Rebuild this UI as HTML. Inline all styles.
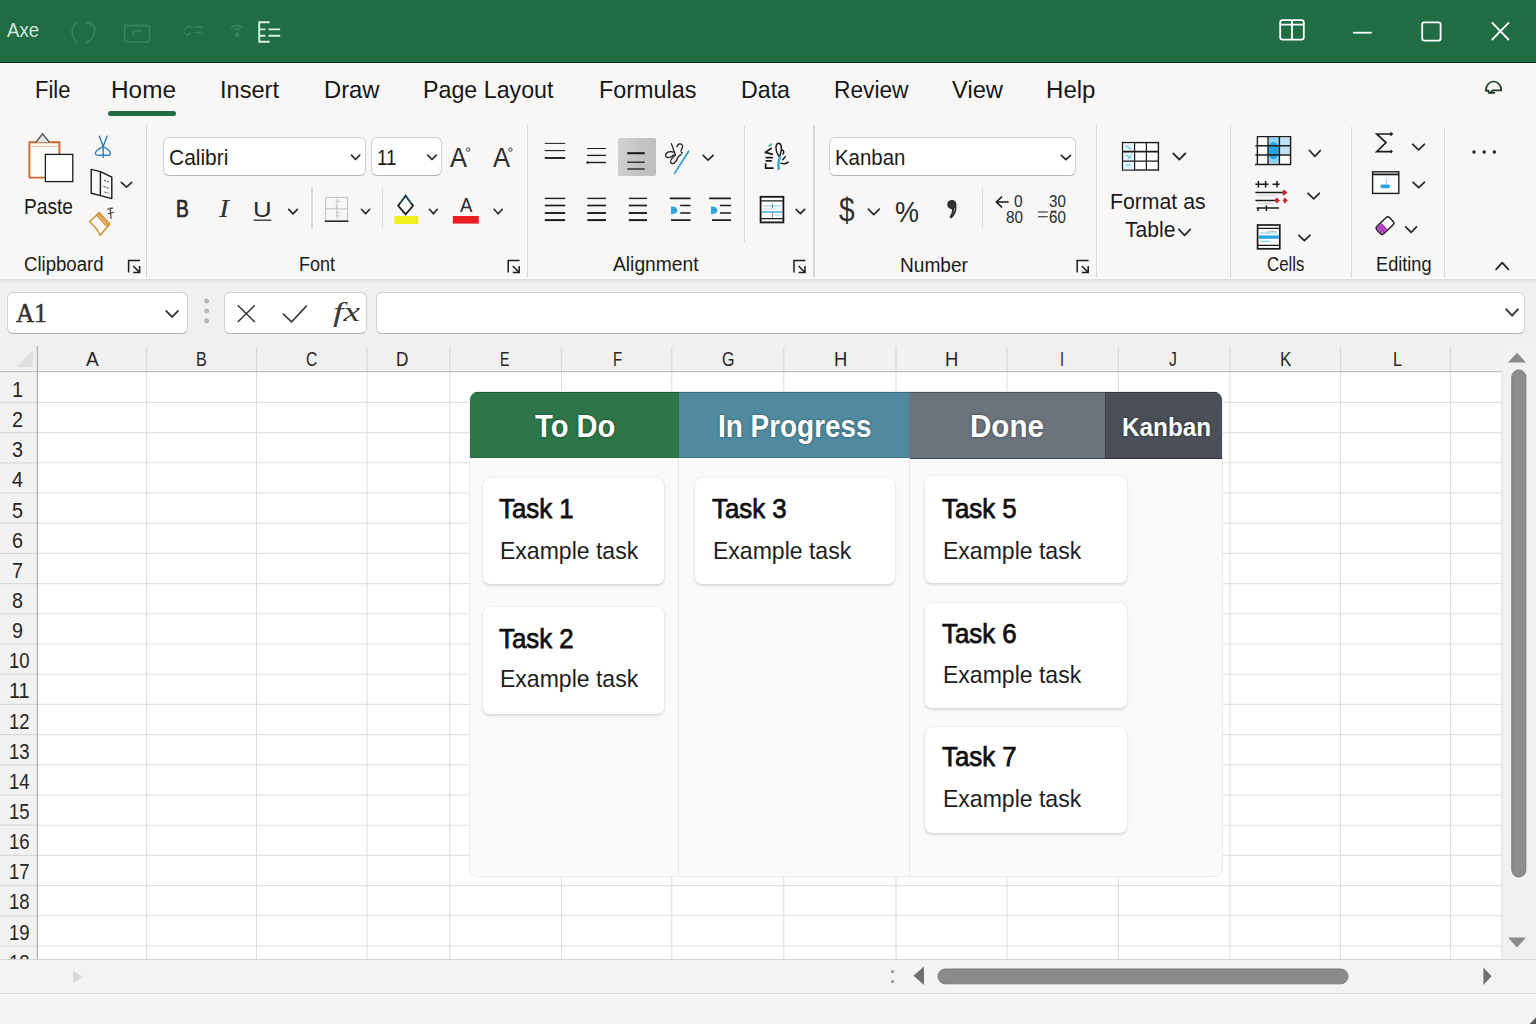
<!DOCTYPE html>
<html lang="en"><head><meta charset="utf-8"><title>Kanban - Excel</title>
<style>
html,body{margin:0;padding:0;}
body{width:1536px;height:1024px;overflow:hidden;background:#f0f0f0;}
#app{position:relative;width:1536px;height:1024px;overflow:hidden;background:#f0f0f0;font-family:"Liberation Sans",sans-serif;}
#app>div,#app>svg{position:absolute;}
.t{position:absolute;white-space:nowrap;line-height:1;transform-origin:0 50%;display:block;}
#titlebar{left:0;top:0;width:1536px;height:62.8px;background:#206c43;border-bottom:1.3px solid #0d301c;box-sizing:border-box;}
#ribbon{left:0;top:62.8px;width:1536px;height:216.2px;background:#f8f7f6;}
#ribshadow{left:0;top:279px;width:1536px;height:5px;background:linear-gradient(#dcdcdc,#ececec 60%,#f0f0f0);}
#tabline{left:108px;top:110.6px;width:68px;height:5px;border-radius:3px;background:#1f6e42;}
.box{background:#fff;border:1px solid #d0d0d0;border-bottom-color:#b4b4b4;border-radius:6px;box-sizing:border-box;}
.sep{width:1.4px;background:#d8d8d8;}
#grid{left:0;top:344px;width:1502px;height:615px;background:#fff;overflow:hidden;}
#hscroll{z-index:3;left:0;top:959px;width:1536px;height:34px;background:#f3f3f3;border-top:1.6px solid #d4d4d4;box-sizing:border-box;}
#status{z-index:3;left:0;top:993px;width:1536px;height:31px;background:#f5f4f3;border-top:1.4px solid #dcdcdc;box-sizing:border-box;}
#board{left:470px;top:392.4px;width:752px;height:483.6px;border-radius:8px;background:#fafafa;overflow:hidden;box-shadow:0 0 0 1px #ececec;}
#board>div{position:absolute;}
.card{position:absolute;background:#fff;border-radius:7px;box-shadow:0 1.5px 3px rgba(0,0,0,.13),0 0 1.5px rgba(0,0,0,.09);}
#ov{z-index:4;}

</style></head>
<body>
<div id="app">
<div id="titlebar"></div>
<div id="ribbon"></div>
<div id="ribshadow"></div>
<div style="left:0;top:277.4px;width:1536px;height:1.4px;background:#fcfcfc"></div>
<div id="tabline"></div>
<!-- ribbon boxes -->
<div class="box" style="left:163.2px;top:137.2px;width:202.4px;height:39.2px"></div>
<div class="box" style="left:371px;top:137.2px;width:70.8px;height:39.2px"></div>
<div class="box" style="left:829.2px;top:137.2px;width:246.6px;height:39.2px"></div>
<div style="left:618px;top:138px;width:37.6px;height:37.8px;background:linear-gradient(100deg,#d3d3d3,#c3c3c3 55%,#bdbdbd);border-radius:2px"></div>
<!-- separators -->
<div class="sep" style="left:145.6px;top:125px;height:153px"></div>
<div class="sep" style="left:526.8px;top:125px;height:153px"></div>
<div class="sep" style="left:813.2px;top:125px;height:153px"></div>
<div class="sep" style="left:1095.8px;top:125px;height:153px"></div>
<div class="sep" style="left:1230px;top:125px;height:153px"></div>
<div class="sep" style="left:1351px;top:127px;height:151px"></div>
<div class="sep" style="left:1444px;top:127px;height:151px"></div>
<div class="sep" style="left:311.2px;top:188px;height:40px"></div>
<div class="sep" style="left:382px;top:188px;height:40px"></div>
<div class="sep" style="left:744px;top:126px;height:116px"></div>
<div class="sep" style="left:981.8px;top:188px;height:40px"></div>
<!-- formula bar -->
<div class="box" style="left:7.2px;top:292.2px;width:180.4px;height:41.6px"></div>
<div class="box" style="left:224.4px;top:292.2px;width:142.8px;height:41.6px"></div>
<div class="box" style="left:375.6px;top:292.2px;width:1149.6px;height:41.6px"></div>
<!-- grid -->
<div style="left:1502px;top:344px;width:34px;height:615px;background:#f1f1f1"></div>
<div id="grid"></div>
<svg id="gridsvg" width="1536" height="1024" viewBox="0 0 1536 1024" style="left:0;top:0;pointer-events:none">
<rect x="0" y="344" width="1502" height="27.6" fill="#f0f0f0"/>
<rect x="0" y="371.6" width="37.4" height="587.4" fill="#f2f2f2"/>
<path d="M37.4 402.4H1502 M37.4 432.6H1502 M37.4 462.8H1502 M37.4 493.0H1502 M37.4 523.2H1502 M37.4 553.4H1502 M37.4 583.6H1502 M37.4 613.8H1502 M37.4 644.0H1502 M37.4 674.2H1502 M37.4 704.4H1502 M37.4 734.6H1502 M37.4 764.8H1502 M37.4 795.0H1502 M37.4 825.2H1502 M37.4 855.4H1502 M37.4 885.6H1502 M37.4 915.8H1502 M37.4 946.0H1502" stroke="#e1e1e1" stroke-width="1.1" fill="none"/>
<path d="M146.6 372V959 M256.5 372V959 M367 372V959 M449.8 372V959 M561.5 372V959 M671.8 372V959 M783.8 372V959 M896 372V959 M1007 372V959 M1118.4 372V959 M1230 372V959 M1340.5 372V959 M1450.4 372V959" stroke="#dcdcdc" stroke-width="1" fill="none"/>
<path d="M146.6 347V371 M256.5 347V371 M367 347V371 M449.8 347V371 M561.5 347V371 M671.8 347V371 M783.8 347V371 M896 347V371 M1007 347V371 M1118.4 347V371 M1230 347V371 M1340.5 347V371 M1450.4 347V371" stroke="#d9d9d9" stroke-width="1.2" fill="none"/>
<path d="M0 402.4H37.4 M0 432.6H37.4 M0 462.8H37.4 M0 493.0H37.4 M0 523.2H37.4 M0 553.4H37.4 M0 583.6H37.4 M0 613.8H37.4 M0 644.0H37.4 M0 674.2H37.4 M0 704.4H37.4 M0 734.6H37.4 M0 764.8H37.4 M0 795.0H37.4 M0 825.2H37.4 M0 855.4H37.4 M0 885.6H37.4 M0 915.8H37.4 M0 946.0H37.4" stroke="#d9d9d9" stroke-width="1.2" fill="none"/>
<path d="M0 371.6H1502" stroke="#c2c2c2" stroke-width="1.4" fill="none"/><path d="M37.4 346V959" stroke="#b4b4b4" stroke-width="1.3" fill="none"/>
<path d="M1502 372V959" stroke="#e0e0e0" stroke-width="1.2"/>
<path d="M33 350V367H17Z" fill="#dedede"/>
</svg>
<div id="board">
  <div style="left:0;top:0;width:209px;height:65.6px;background:#2c7649;border-top:1.2px solid #175a33;border-bottom:1.4px solid #23673f;box-sizing:border-box"></div>
  <div style="left:209px;top:0;width:230px;height:65.6px;background:#508a9f;border-top:1.2px solid #336b80;border-bottom:1.4px solid #417a90;box-sizing:border-box"></div>
  <div style="left:439px;top:0;width:196px;height:66.4px;background:#6b737d;border-top:1.2px solid #4d535b;border-bottom:1.8px solid #3c4148;box-sizing:border-box"></div>
  <div style="left:635px;top:0;width:117px;height:66.4px;background:#4a4f58;border-top:1.2px solid #34383f;border-bottom:1.8px solid #2c3036;border-left:1.2px solid #3e434b;box-sizing:border-box"></div>
  <div style="left:208px;top:66px;width:1px;height:420px;background:#e8e8e8"></div>
  <div style="left:439px;top:66px;width:1px;height:420px;background:#e9e9e9"></div>
</div>
<div class="card" style="left:483px;top:477.6px;width:180.6px;height:106.6px"></div>
<div class="card" style="left:483px;top:607.4px;width:180.6px;height:106.4px"></div>
<div class="card" style="left:695px;top:477.6px;width:200.2px;height:106.6px"></div>
<div class="card" style="left:924.8px;top:476.4px;width:202.4px;height:107px"></div>
<div class="card" style="left:924.8px;top:602.6px;width:202.4px;height:105.2px"></div>
<div class="card" style="left:924.8px;top:726.6px;width:202.4px;height:106.2px"></div>
<div id="hscroll"></div>
<div id="status"></div>

<svg id="ov" width="1536" height="1024" viewBox="0 0 1536 1024" style="left:0;top:0;pointer-events:none">
<g fill="none" stroke="#38835a" stroke-width="1.6" stroke-linecap="round" stroke-linejoin="round"><path d="M76 22.5C70.5 28 70.5 36 77.5 43"/><path d="M89.5 22C97 26 97 37 86.5 42.5"/><path d="M86.5 24L90 22L91.5 25.5"/><rect x="124.6" y="25.4" width="25" height="16.6" rx="2.5"/><path d="M133 31H142 M133 31V35"/><path d="M124.6 23.6V26"/><path d="M185 30C186 26 190 25 192 28 M184.5 33L187.5 35.5L190.5 32.5 M195 27H202 M195 32.5H201"/><path d="M231.5 27.5C234 25 239.5 25 242.5 27.5 M234 29.5H240"/><circle cx="237" cy="34.6" r="1.5" fill="#38835a"/></g>
<path d="M259.2 21.6V42.4 M258.4 22.2H269.6 M258.4 29.4H265.4 M268.4 29.4H280.2 M258.4 35.8H265.4 M268.4 35.8H280.2 M258.4 41.8H269.6" fill="none" stroke="#d9f3e2" stroke-width="1.9"/>
<g fill="none" stroke="#ffffff" stroke-width="1.8"><rect x="1280.2" y="20.2" width="23.6" height="19.4" rx="2.4"/><path d="M1280.2 24.6H1303.8 M1292 20.2V39.6"/><path d="M1353 32.7H1371.8"/><rect x="1422.2" y="22.4" width="18.4" height="18.2" rx="2"/><path d="M1491.8 22.4L1509 40 M1509 22.4L1491.8 40"/></g>
<g fill="none" stroke="#173c27" stroke-width="1.7" stroke-linecap="round" stroke-linejoin="round"><path d="M1486 90.2A7.6 8.7 0 0 1 1501.2 90.2"/><path d="M1501.2 90.4H1492.4L1490.8 92.8"/><path d="M1485.8 90.4L1488.4 90.8L1488.8 92.8H1494.2" stroke-width="2"/></g>
<path d="M29.4 142.2H59.4V177.6H29.4Z" fill="#fdfbf8" stroke="#c9682d" stroke-width="1.9" stroke-linejoin="round"/>
<path d="M31 146.4H58" stroke="#edc3a5" stroke-width="1"/>
<path d="M36 142.2L42.6 133.8L49.2 142.2" fill="#dfe9ea" stroke="#4a4a4a" stroke-width="1.3" stroke-linejoin="miter"/>
<rect x="45.4" y="154.4" width="27.4" height="27.2" fill="#ffffff" stroke="#1b1b1b" stroke-width="1.3"/>
<g fill="none" stroke="#2b7bc0" stroke-width="1.4" stroke-linecap="round"><path d="M99.4 136.2L103.2 146.4L107 136.2"/><path d="M103.2 144.6V157.4"/><path d="M103.2 146.6C99 148.6 94.6 151.6 95.4 154C96.2 156 101 155.6 103.2 154.6C105.6 155.6 110 156 110.4 154C110.8 151.6 107.2 148.6 103.2 146.6Z"/></g>
<g fill="none" stroke="#1b1b1b" stroke-width="1.4" stroke-linejoin="round"><path d="M91.2 169.4V193.2L100.4 195.6V171.6Z"/><path d="M100.4 171.6L111.8 177.2V198.6L100.4 195.6"/></g>
<path d="M104 180.2L108.6 182 M103.6 186.4L108.6 188.2 M104.4 192L108.6 193.2" stroke="#333" stroke-width="1" stroke-dasharray="2 1.2"/>
<path d="M121.3 182.3L126.5 187.1L131.7 182.3" fill="none" stroke="#2b2b2b" stroke-width="1.7" stroke-linecap="round" stroke-linejoin="round"/>
<g fill="none" stroke="#cf8a22" stroke-width="1.4" stroke-linejoin="round"><path d="M89.6 221.8L99.4 212.6L109.8 224L100.2 235.2C97.6 229.6 94 225.4 89.6 221.8Z" fill="#fdfcf8"/><path d="M98.2 213.8L108.4 225.2 M96.8 215.2L106.8 226.4"/></g>
<path d="M107.6 209.2L112.6 208.2 M110.2 207.8L111 218.4 M108.4 213.6L113.2 212.4" fill="none" stroke="#4a4a4a" stroke-width="1.2" stroke-linecap="round"/>
<path d="M128.6 272.59999999999997V260.4H140.0 M133.2 266.0L139.4 272.2 M133.2 272.4H139.6V266.0" fill="none" stroke="#1c1c1c" stroke-width="1.5" stroke-linejoin="miter"/>
<path d="M351.5 155.1L355.6 159.5L359.7 155.1" fill="none" stroke="#2b2b2b" stroke-width="1.7" stroke-linecap="round" stroke-linejoin="round"/>
<path d="M427.7 155.1L432.0 159.5L436.3 155.1" fill="none" stroke="#2b2b2b" stroke-width="1.7" stroke-linecap="round" stroke-linejoin="round"/>
<circle cx="468.2" cy="149.6" r="1.7" fill="none" stroke="#2a2a2a" stroke-width="0.9"/>
<circle cx="510.4" cy="149.6" r="1.7" fill="none" stroke="#2a2a2a" stroke-width="0.9"/>
<path d="M253.6 220.2H271.2" stroke="#2a2a2a" stroke-width="1.3"/>
<path d="M288.7 209.3L293.0 213.8L297.3 209.3" fill="none" stroke="#2b2b2b" stroke-width="1.7" stroke-linecap="round" stroke-linejoin="round"/>
<path d="M325.6 221V197.4H347.6V221 M325.6 208.8H347.6 M337 199V219" fill="none" stroke="#b9b9b9" stroke-width="0.9"/>
<path d="M335 201.4H340 M337.4 204.6C335.6 205.6 335.6 207 337.6 207.4 M335.4 212.4H340.4 M336 215.8H340.6" fill="none" stroke="#c7c7c7" stroke-width="0.8"/>
<path d="M324.8 221.2H348.4" stroke="#1b1b1b" stroke-width="1.5"/>
<path d="M361.5 209.3L365.6 213.8L369.7 209.3" fill="none" stroke="#2b2b2b" stroke-width="1.7" stroke-linecap="round" stroke-linejoin="round"/>
<path d="M405.6 195.6L413 205.8L405.6 214.4L398.2 205.8Z" fill="#fbfbfb" stroke="#1b1b1b" stroke-width="1.8" stroke-linejoin="miter"/>
<path d="M399.4 203.2L405.6 194.6L411.8 203.2" fill="none" stroke="#4f9cc0" stroke-width="0.9"/>
<rect x="394.4" y="216" width="23.8" height="8" fill="#f1ee1d"/>
<path d="M429.5 209.3L433.4 213.8L437.3 209.3" fill="none" stroke="#2b2b2b" stroke-width="1.7" stroke-linecap="round" stroke-linejoin="round"/>
<rect x="452.8" y="216" width="26" height="7.6" fill="#ec1c24"/>
<path d="M494.1 209.3L498.2 213.8L502.3 209.3" fill="none" stroke="#2b2b2b" stroke-width="1.7" stroke-linecap="round" stroke-linejoin="round"/>
<path d="M508.2 272.59999999999997V260.4H519.6 M512.8 266.0L519.0 272.2 M512.8 272.4H519.2V266.0" fill="none" stroke="#1c1c1c" stroke-width="1.5" stroke-linejoin="miter"/>
<path d="M544.8 143.4H565.2" stroke="#1d1d1d" stroke-width="1.0"/>
<path d="M544.8 150.6H565.2" stroke="#1d1d1d" stroke-width="1.1"/>
<path d="M544.8 158H565.2" stroke="#1d1d1d" stroke-width="1.9"/>
<path d="M587 148.5H606" stroke="#1d1d1d" stroke-width="1.0"/>
<path d="M587 155.4H606" stroke="#1d1d1d" stroke-width="1.3"/>
<path d="M587 162.5H606" stroke="#1d1d1d" stroke-width="1.4"/>
<circle cx="587.6" cy="162.5" r="1.2" fill="#1d1d1d"/>
<path d="M627.2 153.2H644.8" stroke="#1d1d1d" stroke-width="2.1"/>
<path d="M627.2 162.2H644.8" stroke="#1d1d1d" stroke-width="1.3"/>
<path d="M627.2 169H644.8" stroke="#1d1d1d" stroke-width="1.3"/>
<g fill="none" stroke="#1d1d1d" stroke-width="1.25" stroke-linecap="round"><path d="M671.4 143.6L675.4 155"/><path d="M674.4 152.6C671 150.4 666 152 665.6 155.2C665.4 158.4 670.6 158.2 673.6 155"/><path d="M675.6 154.8C673 157 669.6 161 671 163C673 165 676.8 161.4 677.6 158C678 156.4 679.4 155.4 681 154.6"/><path d="M677 146.8C677.6 143.4 682 142.8 682.6 146C683 148.4 680.8 149.2 681 151.2"/></g>
<circle cx="681.8" cy="152.8" r="1" fill="#1d1d1d"/>
<path d="M674.6 173.4L688.6 151.2" stroke="#2a9ad6" stroke-width="1.7" stroke-linecap="round"/>
<path d="M703.1 155.3L708.1 160.1L713.1 155.3" fill="none" stroke="#2b2b2b" stroke-width="1.7" stroke-linecap="round" stroke-linejoin="round"/>
<path d="M544.8 198.4H565.2" stroke="#1d1d1d" stroke-width="1.4"/>
<path d="M544.8 205.5H565.2" stroke="#1d1d1d" stroke-width="1.7"/>
<path d="M544.8 213H565.2" stroke="#1d1d1d" stroke-width="1.9"/>
<path d="M544.8 220.1H565.2" stroke="#1d1d1d" stroke-width="2.0"/>
<path d="M587.3 198.4H606" stroke="#1d1d1d" stroke-width="1.4"/>
<path d="M587.3 205.5H606" stroke="#1d1d1d" stroke-width="1.7"/>
<path d="M587.3 213H606" stroke="#1d1d1d" stroke-width="1.9"/>
<path d="M587.3 220.1H606" stroke="#1d1d1d" stroke-width="2.0"/>
<path d="M628.8 198.4H647" stroke="#1d1d1d" stroke-width="1.4"/>
<path d="M628.8 205.5H647" stroke="#1d1d1d" stroke-width="1.7"/>
<path d="M628.8 213H647" stroke="#1d1d1d" stroke-width="1.9"/>
<path d="M628.8 220.1H647" stroke="#1d1d1d" stroke-width="2.0"/>
<path d="M669.8 198.4H690.6 M680.2 205.5H690.6 M680.2 213H690.6 M671 220.1H690.6" stroke="#1d1d1d" stroke-width="1.7"/>
<path d="M671 206.6C679.6 205.8 679.6 215 671 214.2Z" fill="#2ea3dc"/>
<path d="M709.2 198.4H731 M720 205.5H731 M720 213H731 M712 220.1H731" stroke="#1d1d1d" stroke-width="1.7"/>
<path d="M711 206.6C719.6 205.8 719.6 215 711 214.2Z" fill="#2ea3dc"/>
<g fill="none" stroke="#151515" stroke-width="1.7" stroke-linejoin="round"><path d="M771.6 148L765.4 152.4L772.8 154.4"/><path d="M765.6 157.6H773 M765.6 160.8H771.8 M765.6 163.2V168.2H773.6"/></g>
<g fill="none" stroke="#151515" stroke-width="1.4" stroke-linecap="round"><path d="M778.8 156C774.6 150 775.4 143.4 778.6 143.2C781.6 143.2 782.4 149 780 155.4"/><path d="M781.6 149.8C783.8 150.2 784.4 152.2 783 154"/><path d="M785.4 156.6L782.6 159.8"/><path d="M781 163.2C783.6 164 786.8 163.8 788.2 162"/></g>
<path d="M779.8 156.8C778.4 161 778 165 778.6 169.2" fill="none" stroke="#2a9fd0" stroke-width="2.2" stroke-linecap="round"/>
<path d="M769.2 146L771.4 144.2" stroke="#2aa06a" stroke-width="1.6" stroke-linecap="round"/>
<rect x="760.6" y="196.8" width="22.8" height="25.6" fill="#fdfdfd" stroke="#151515" stroke-width="1.8"/>
<path d="M760.4 200.8H783.6 M760.4 218.6H783.6" stroke="#1b1b1b" stroke-width="1.2"/>
<path d="M763 206H781" stroke="#8fd0f2" stroke-width="1.2"/><path d="M763 209H776" stroke="#b9c9f5" stroke-width="0.8"/><path d="M761.4 212H782.6" stroke="#2a9ad6" stroke-width="1.3"/><path d="M772.4 203.6V208.4 M772.4 212.6V217.8" stroke="#7d8a94" stroke-width="1"/><path d="M775 215H781" stroke="#8fd0f2" stroke-width="1"/>
<path d="M796.1 209.3L800.4 213.7L804.7 209.3" fill="none" stroke="#2b2b2b" stroke-width="1.7" stroke-linecap="round" stroke-linejoin="round"/>
<path d="M794 272.59999999999997V260.4H805.4 M798.6 266.0L804.8 272.2 M798.6 272.4H805V266.0" fill="none" stroke="#1c1c1c" stroke-width="1.5" stroke-linejoin="miter"/>
<path d="M1061.3 155.3L1065.9 159.7L1070.5 155.3" fill="none" stroke="#2b2b2b" stroke-width="1.7" stroke-linecap="round" stroke-linejoin="round"/>
<path d="M868.3 209.1L873.8 214.7L879.3 209.1" fill="none" stroke="#2b2b2b" stroke-width="1.7" stroke-linecap="round" stroke-linejoin="round"/>
<path d="M951.8 199.8A4.7 4.7 0 1 1 949.4 208.8C952 209 953.6 207.8 954 205.6C954.6 210.4 953.6 214.6 950.8 217.6L949.4 216.8C951.6 214 952.2 211.4 952 209.2Z" fill="#2a2a2a"/>
<circle cx="951.8" cy="204.5" r="4.6" fill="#2f2f2f"/>
<path d="M955.6 206C956 211 954 215 951 217.6" fill="none" stroke="#2a2a2a" stroke-width="1.6" stroke-linecap="round"/>
<path d="M996.6 202H1008.6 M1002 196.6L996.4 202L1002 207.4" fill="none" stroke="#1d1d1d" stroke-width="1.6" stroke-linejoin="miter"/>
<path d="M1038 212H1047.8 M1038 216.7H1047.8" stroke="#1d1d1d" stroke-width="1.1"/>
<path d="M1050.6 211.2H1056.4" stroke="#1d1d1d" stroke-width="1"/>
<path d="M1077.2 272.59999999999997V260.4H1088.6000000000001 M1081.8 266.0L1088.0 272.2 M1081.8 272.4H1088.2V266.0" fill="none" stroke="#1c1c1c" stroke-width="1.5" stroke-linejoin="miter"/>
<rect x="1122.6" y="142.6" width="35.8" height="27.4" fill="#fdfdfd" stroke="#1b1b1b" stroke-width="1.4"/>
<rect x="1123.4" y="143.4" width="10.6" height="26" fill="#e3f3fb"/>
<path d="M1134.6 142.6V170 M1146.4 142.6V170 M1122.6 161.2H1158.4" stroke="#1b1b1b" stroke-width="1.2"/><path d="M1122.6 151.6H1158.4" stroke="#1b1b1b" stroke-width="1.7"/>
<path d="M1125.4 146L1131.4 149 M1126 155L1131 158.4 M1131.4 154.6L1128 159 M1126 165H1130" stroke="#59b6e6" stroke-width="1" fill="none"/>
<path d="M1173.3 153.5L1179.3 159.5L1185.3 153.5" fill="none" stroke="#2b2b2b" stroke-width="1.8" stroke-linecap="round" stroke-linejoin="round"/>
<path d="M1178.9 229.3L1184.6 235.3L1190.3 229.3" fill="none" stroke="#2b2b2b" stroke-width="1.8" stroke-linecap="round" stroke-linejoin="round"/>
<rect x="1257.4" y="136.6" width="33.2" height="27.2" fill="#fdfdfd"/>
<rect x="1268.6" y="137.2" width="10.6" height="26" fill="#8ed3f3"/><rect x="1280" y="137.6" width="10" height="16.6" fill="#bfe3f5"/><ellipse cx="1273.4" cy="150.6" rx="5.4" ry="8.6" fill="#27a3e0"/>
<path d="M1257.4 164.4V136.6H1290.6V164.4 M1268 136.6V164.4 M1279.4 136.6V164.4 M1255.4 145.8H1290.6 M1255.4 155H1290.6" fill="none" stroke="#1b1b1b" stroke-width="1.4"/><path d="M1255 164.6H1291" stroke="#1b1b1b" stroke-width="1.5"/>
<path d="M1309.5 150.5L1314.9 156.3L1320.3 150.5" fill="none" stroke="#2b2b2b" stroke-width="1.8" stroke-linecap="round" stroke-linejoin="round"/>
<g fill="none" stroke="#1b1b1b" stroke-width="1.5"><path d="M1255.4 184.2H1268.4 M1258.4 181V187.6 M1265.6 181V187.6 M1272.6 184.2H1279.6 M1277 181V187.6"/><path d="M1255.4 192.6H1284 M1255.4 200.4H1278 M1256.6 208H1279 M1266.4 205.6V211 M1258 208V211"/></g>
<path d="M1257 195.6H1276 M1257 203.6H1274" stroke="#c9d3d8" stroke-width="1"/>
<path d="M1283.6 189.4L1287.6 192.6L1283.6 195.8L1282 192.6Z M1276.4 197.4L1280 200.4L1276.4 203.4L1274.6 200.4Z M1284.6 197.4L1287.8 200.4L1284.6 203.4L1282.8 200.4Z" fill="#c4262e"/>
<path d="M1308.1 193.3L1313.7 198.9L1319.3 193.3" fill="none" stroke="#2b2b2b" stroke-width="1.8" stroke-linecap="round" stroke-linejoin="round"/>
<rect x="1257.6" y="225" width="22.2" height="23.8" fill="#fdfdfd" stroke="#1b1b1b" stroke-width="1.7"/>
<path d="M1257.6 228.4H1279.8 M1257.6 245.4H1279.8" stroke="#1b1b1b" stroke-width="1.4"/>
<rect x="1258.6" y="235.4" width="20.2" height="3.4" fill="#2ba6e2"/><path d="M1259.4 233H1278 M1260 241.4H1270" stroke="#8ed3f3" stroke-width="1.1"/><path d="M1267.6 230.6V234 M1269 231.6H1276" stroke="#9aa7ae" stroke-width="0.8"/>
<path d="M1298.9 235.3L1304.4 240.7L1309.9 235.3" fill="none" stroke="#2b2b2b" stroke-width="1.8" stroke-linecap="round" stroke-linejoin="round"/>
<path d="M1391.6 134H1376.8L1386 142.6L1376.8 151.6H1392" fill="none" stroke="#1b1b1b" stroke-width="1.7" stroke-linejoin="miter"/>
<path d="M1390.4 131.6L1393.4 134L1390.4 136.4Z M1390.6 149.6L1393 151.6L1390.6 153.6Z" fill="#1b1b1b"/>
<path d="M1412.7 144.3L1418.5 149.9L1424.3 144.3" fill="none" stroke="#2b2b2b" stroke-width="1.8" stroke-linecap="round" stroke-linejoin="round"/>
<rect x="1372.6" y="171.8" width="26.2" height="21.6" fill="#fdfdfd" stroke="#1b1b1b" stroke-width="1.4"/><path d="M1372.6 174.4H1398.8" stroke="#1b1b1b" stroke-width="1.8"/>
<rect x="1380.4" y="184.6" width="9.6" height="3.6" rx="1.6" fill="#2ba6e2"/><path d="M1386.4 178V184" stroke="#9bd6f3" stroke-width="1"/>
<path d="M1413.1 182.3L1418.7 187.7L1424.3 182.3" fill="none" stroke="#2b2b2b" stroke-width="1.8" stroke-linecap="round" stroke-linejoin="round"/>
<g transform="rotate(-44 1385 225.6)"><rect x="1376.2" y="220.6" width="17.6" height="10" rx="2.6" fill="#fdfdfd" stroke="#1b1b1b" stroke-width="1.4"/><path d="M1378.8 221.3H1384.4V229.9H1378.8A1.9 1.9 0 0 1 1376.9 228V223.2A1.9 1.9 0 0 1 1378.8 221.3Z" fill="#b440c2"/></g>
<path d="M1405.7 226.9L1411.1 232.3L1416.5 226.9" fill="none" stroke="#2b2b2b" stroke-width="1.8" stroke-linecap="round" stroke-linejoin="round"/>
<circle cx="1474" cy="152" r="1.65" fill="#1d1d1d"/><circle cx="1484.2" cy="152" r="1.65" fill="#1d1d1d"/><circle cx="1494.4" cy="152" r="1.65" fill="#1d1d1d"/>
<path d="M1496.1 269.3L1502.2 262.7L1508.3 269.3" fill="none" stroke="#2b2b2b" stroke-width="1.9" stroke-linecap="round" stroke-linejoin="round"/>
<path d="M166.3 311.1L172.1 316.9L177.9 311.1" fill="none" stroke="#3a3a3a" stroke-width="2.0" stroke-linecap="round" stroke-linejoin="round"/>
<path d="M1506.3 309.3L1512.1 315.7L1517.9 309.3" fill="none" stroke="#3a3a3a" stroke-width="2.0" stroke-linecap="round" stroke-linejoin="round"/>
<g fill="#bdbdbd" stroke="#a2a2a2" stroke-width="0.7"><circle cx="206.6" cy="301" r="2"/><circle cx="206.6" cy="311" r="2"/><circle cx="206.6" cy="320.8" r="2"/></g>
<path d="M237.8 305.2L254.8 322 M254.8 305.2L237.8 322" stroke="#3a3a3a" stroke-width="1.6" fill="none"/>
<path d="M282.8 313.6L291.6 321.8L306.8 305.6" stroke="#3a3a3a" stroke-width="1.6" fill="none"/>
<path d="M1508 362.4L1517 352.8L1526 362.4Z" fill="#8a8a8a"/>
<rect x="1511.8" y="370" width="14" height="507" rx="7" fill="#8d8d8d" stroke="#7a7a7a" stroke-width="1"/>
<path d="M1508 937.6L1517 947.4L1526 937.6Z" fill="#8a8a8a"/>
<path d="M924 966.6V985L913.4 975.8Z" fill="#707070"/>
<rect x="938" y="969" width="410" height="14.8" rx="7.4" fill="#8b8b8b" stroke="#7a7a7a" stroke-width="1"/>
<path d="M1483.4 967.6V985L1491.6 976.2Z" fill="#707070"/>
<circle cx="892.6" cy="971.6" r="1.6" fill="#9a9a9a"/><circle cx="892.6" cy="981.6" r="1.6" fill="#9a9a9a"/>
<path d="M73.2 970.8V983L82.6 976.9Z" fill="#d9d9d9"/>
<path d="M1536 1017.6L1529.6 1024H1536Z" fill="#5a5a5a"/>
</svg>
<span class="t" id="t0" style="left:7.00px;top:21.20px;font-size:19.5px;font-weight:400;font-family:'Liberation Sans',sans-serif;color:#d3e6da;transform:scaleX(0.9521);">Axe</span>
<span class="t" id="t1" style="left:35.00px;top:78.21px;font-size:24.6px;font-weight:400;font-family:'Liberation Sans',sans-serif;color:#161616;transform:scaleX(0.8955);">File</span>
<span class="t" id="t2" style="left:110.50px;top:78.21px;font-size:24.6px;font-weight:400;font-family:'Liberation Sans',sans-serif;color:#161616;transform:scaleX(0.9907);">Home</span>
<span class="t" id="t3" style="left:220.00px;top:78.21px;font-size:24.6px;font-weight:400;font-family:'Liberation Sans',sans-serif;color:#161616;transform:scaleX(0.9591);">Insert</span>
<span class="t" id="t4" style="left:324.00px;top:78.21px;font-size:24.6px;font-weight:400;font-family:'Liberation Sans',sans-serif;color:#161616;transform:scaleX(0.9671);">Draw</span>
<span class="t" id="t5" style="left:423.00px;top:78.21px;font-size:24.6px;font-weight:400;font-family:'Liberation Sans',sans-serif;color:#161616;transform:scaleX(0.9448);">Page Layout</span>
<span class="t" id="t6" style="left:599.00px;top:78.21px;font-size:24.6px;font-weight:400;font-family:'Liberation Sans',sans-serif;color:#161616;transform:scaleX(0.9512);">Formulas</span>
<span class="t" id="t7" style="left:740.50px;top:78.21px;font-size:24.6px;font-weight:400;font-family:'Liberation Sans',sans-serif;color:#161616;transform:scaleX(0.9432);">Data</span>
<span class="t" id="t8" style="left:834.00px;top:78.21px;font-size:24.6px;font-weight:400;font-family:'Liberation Sans',sans-serif;color:#161616;transform:scaleX(0.9239);">Review</span>
<span class="t" id="t9" style="left:951.50px;top:78.21px;font-size:24.6px;font-weight:400;font-family:'Liberation Sans',sans-serif;color:#161616;transform:scaleX(0.9645);">View</span>
<span class="t" id="t10" style="left:1046.00px;top:78.21px;font-size:24.6px;font-weight:400;font-family:'Liberation Sans',sans-serif;color:#161616;transform:scaleX(0.9784);">Help</span>
<span class="t" id="t11" style="left:23.60px;top:196.01px;font-size:21.8px;font-weight:400;font-family:'Liberation Sans',sans-serif;color:#1b1b1b;transform:scaleX(0.8789);">Paste</span>
<span class="t" id="t12" style="left:24.00px;top:255.01px;font-size:19.6px;font-weight:400;font-family:'Liberation Sans',sans-serif;color:#1b1b1b;transform:scaleX(0.9490);">Clipboard</span>
<span class="t" id="t13" style="left:168.80px;top:147.41px;font-size:22px;font-weight:400;font-family:'Liberation Sans',sans-serif;color:#1b1b1b;transform:scaleX(0.9525);">Calibri</span>
<span class="t" id="t14" style="left:376.50px;top:147.41px;font-size:22px;font-weight:400;font-family:'Liberation Sans',sans-serif;color:#1b1b1b;transform:scaleX(0.8536);">11</span>
<span class="t" id="t15" style="left:176.00px;top:196.70px;font-size:24px;font-weight:400;font-family:'Liberation Sans',sans-serif;color:#262626;transform:scaleX(0.7992);-webkit-text-stroke:0.7px #262626;">B</span>
<span class="t" id="t16" style="left:218.60px;top:196.71px;font-size:24.5px;font-weight:400;font-family:'Liberation Serif',serif;color:#333;font-style:italic;transform:scaleX(1.2237);">I</span>
<span class="t" id="t17" style="left:253.00px;top:199.01px;font-size:22.6px;font-weight:400;font-family:'Liberation Sans',sans-serif;color:#2a2a2a;transform:scaleX(1.1391);">U</span>
<span class="t" id="t18" style="left:298.60px;top:254.82px;font-size:19.6px;font-weight:400;font-family:'Liberation Sans',sans-serif;color:#1b1b1b;transform:scaleX(0.9179);">Font</span>
<span class="t" id="t19" style="left:450.00px;top:142.52px;font-size:28.4px;font-weight:400;font-family:'Liberation Sans',sans-serif;color:#2a2a2a;transform:scaleX(0.8977);">A</span>
<span class="t" id="t20" style="left:493.00px;top:142.52px;font-size:28.4px;font-weight:400;font-family:'Liberation Sans',sans-serif;color:#2a2a2a;transform:scaleX(0.8977);">A</span>
<span class="t" id="t21" style="left:460.00px;top:194.81px;font-size:20px;font-weight:400;font-family:'Liberation Sans',sans-serif;color:#2a2a2a;transform:scaleX(0.9293);">A</span>
<span class="t" id="t22" style="left:613.00px;top:255.41px;font-size:19.6px;font-weight:400;font-family:'Liberation Sans',sans-serif;color:#1b1b1b;transform:scaleX(0.9823);">Alignment</span>
<span class="t" id="t23" style="left:835.00px;top:147.41px;font-size:22px;font-weight:400;font-family:'Liberation Sans',sans-serif;color:#1b1b1b;transform:scaleX(0.9280);">Kanban</span>
<span class="t" id="t24" style="left:838.80px;top:193.81px;font-size:32.6px;font-weight:400;font-family:'Liberation Sans',sans-serif;color:#2e2e2e;transform:scaleX(0.8607);">$</span>
<span class="t" id="t25" style="left:895.20px;top:196.61px;font-size:29.8px;font-weight:400;font-family:'Liberation Sans',sans-serif;color:#2a2a2a;transform:scaleX(0.9057);">%</span>
<span class="t" id="t26" style="left:900.20px;top:256.01px;font-size:19.6px;font-weight:400;font-family:'Liberation Sans',sans-serif;color:#1b1b1b;transform:scaleX(0.9756);">Number</span>
<span class="t" id="t27" style="left:1014.00px;top:193.00px;font-size:17.4px;font-weight:400;font-family:'Liberation Sans',sans-serif;color:#2a2a2a;transform:scaleX(0.8892);">0</span>
<span class="t" id="t28" style="left:1005.60px;top:208.50px;font-size:17.4px;font-weight:400;font-family:'Liberation Sans',sans-serif;color:#2a2a2a;transform:scaleX(0.8788);">80</span>
<span class="t" id="t29" style="left:1049.20px;top:193.00px;font-size:17.4px;font-weight:400;font-family:'Liberation Sans',sans-serif;color:#2a2a2a;transform:scaleX(0.8685);">30</span>
<span class="t" id="t30" style="left:1049.20px;top:208.50px;font-size:17.4px;font-weight:400;font-family:'Liberation Sans',sans-serif;color:#2a2a2a;transform:scaleX(0.8685);">60</span>
<span class="t" id="t31" style="left:1109.60px;top:190.90px;font-size:21.8px;font-weight:400;font-family:'Liberation Sans',sans-serif;color:#1b1b1b;transform:scaleX(0.9744);">Format as</span>
<span class="t" id="t32" style="left:1125.00px;top:219.01px;font-size:21.8px;font-weight:400;font-family:'Liberation Sans',sans-serif;color:#1b1b1b;transform:scaleX(0.9672);">Table</span>
<span class="t" id="t33" style="left:1267.20px;top:254.82px;font-size:19.6px;font-weight:400;font-family:'Liberation Sans',sans-serif;color:#1b1b1b;transform:scaleX(0.8585);">Cells</span>
<span class="t" id="t34" style="left:1376.00px;top:254.82px;font-size:19.6px;font-weight:400;font-family:'Liberation Sans',sans-serif;color:#1b1b1b;transform:scaleX(0.9279);">Editing</span>
<span class="t" id="t35" style="left:15.80px;top:300.41px;font-size:27px;font-weight:400;font-family:'Liberation Serif',serif;color:#333;transform:scaleX(0.9333);-webkit-text-stroke:0.6px #333;">A1</span>
<span class="t" id="t36" style="left:332.60px;top:298.00px;font-size:27.5px;font-weight:400;font-family:'Liberation Serif',serif;color:#3a3a3a;font-style:italic;transform:scaleX(1.3596);">fx</span>
<span class="t" id="t37" style="left:85.65px;top:349.01px;font-size:20.8px;font-weight:400;font-family:'Liberation Sans',sans-serif;color:#262626;transform:scaleX(0.9153);">A</span>
<span class="t" id="t38" style="left:195.62px;top:349.01px;font-size:20.8px;font-weight:400;font-family:'Liberation Sans',sans-serif;color:#262626;transform:scaleX(0.7748);">B</span>
<span class="t" id="t39" style="left:306.35px;top:349.01px;font-size:20.8px;font-weight:400;font-family:'Liberation Sans',sans-serif;color:#262626;transform:scaleX(0.7518);">C</span>
<span class="t" id="t40" style="left:395.80px;top:349.01px;font-size:20.8px;font-weight:400;font-family:'Liberation Sans',sans-serif;color:#262626;transform:scaleX(0.8249);">D</span>
<span class="t" id="t41" style="left:500.25px;top:349.01px;font-size:20.8px;font-weight:400;font-family:'Liberation Sans',sans-serif;color:#262626;transform:scaleX(0.6847);">E</span>
<span class="t" id="t42" style="left:613.45px;top:349.01px;font-size:20.8px;font-weight:400;font-family:'Liberation Sans',sans-serif;color:#262626;transform:scaleX(0.7155);">F</span>
<span class="t" id="t43" style="left:721.75px;top:349.01px;font-size:20.8px;font-weight:400;font-family:'Liberation Sans',sans-serif;color:#262626;transform:scaleX(0.7722);">G</span>
<span class="t" id="t44" style="left:834.35px;top:349.01px;font-size:20.8px;font-weight:400;font-family:'Liberation Sans',sans-serif;color:#262626;transform:scaleX(0.8848);">H</span>
<span class="t" id="t45" style="left:945.35px;top:349.01px;font-size:20.8px;font-weight:400;font-family:'Liberation Sans',sans-serif;color:#262626;transform:scaleX(0.8848);">H</span>
<span class="t" id="t46" style="left:1060.00px;top:349.01px;font-size:20.8px;font-weight:400;font-family:'Liberation Sans',sans-serif;color:#262626;transform:scaleX(0.6919);">I</span>
<span class="t" id="t47" style="left:1169.05px;top:349.01px;font-size:20.8px;font-weight:400;font-family:'Liberation Sans',sans-serif;color:#262626;transform:scaleX(0.7592);">J</span>
<span class="t" id="t48" style="left:1280.30px;top:349.01px;font-size:20.8px;font-weight:400;font-family:'Liberation Sans',sans-serif;color:#262626;transform:scaleX(0.8216);">K</span>
<span class="t" id="t49" style="left:1392.50px;top:349.01px;font-size:20.8px;font-weight:400;font-family:'Liberation Sans',sans-serif;color:#262626;transform:scaleX(0.7773);">L</span>
<span class="t" id="t50" style="left:11.80px;top:379.91px;font-size:21.4px;font-weight:400;font-family:'Liberation Sans',sans-serif;color:#262626;transform:scaleX(0.9239);">1</span>
<span class="t" id="t51" style="left:11.80px;top:410.06px;font-size:21.4px;font-weight:400;font-family:'Liberation Sans',sans-serif;color:#262626;transform:scaleX(0.9239);">2</span>
<span class="t" id="t52" style="left:11.80px;top:440.20px;font-size:21.4px;font-weight:400;font-family:'Liberation Sans',sans-serif;color:#262626;transform:scaleX(0.9239);">3</span>
<span class="t" id="t53" style="left:11.80px;top:470.36px;font-size:21.4px;font-weight:400;font-family:'Liberation Sans',sans-serif;color:#262626;transform:scaleX(0.9239);">4</span>
<span class="t" id="t54" style="left:11.80px;top:500.51px;font-size:21.4px;font-weight:400;font-family:'Liberation Sans',sans-serif;color:#262626;transform:scaleX(0.9239);">5</span>
<span class="t" id="t55" style="left:11.80px;top:530.66px;font-size:21.4px;font-weight:400;font-family:'Liberation Sans',sans-serif;color:#262626;transform:scaleX(0.9239);">6</span>
<span class="t" id="t56" style="left:11.80px;top:560.81px;font-size:21.4px;font-weight:400;font-family:'Liberation Sans',sans-serif;color:#262626;transform:scaleX(0.9239);">7</span>
<span class="t" id="t57" style="left:11.80px;top:590.95px;font-size:21.4px;font-weight:400;font-family:'Liberation Sans',sans-serif;color:#262626;transform:scaleX(0.9239);">8</span>
<span class="t" id="t58" style="left:11.80px;top:621.11px;font-size:21.4px;font-weight:400;font-family:'Liberation Sans',sans-serif;color:#262626;transform:scaleX(0.9239);">9</span>
<span class="t" id="t59" style="left:8.60px;top:651.26px;font-size:21.4px;font-weight:400;font-family:'Liberation Sans',sans-serif;color:#262626;transform:scaleX(0.8657);">10</span>
<span class="t" id="t60" style="left:8.60px;top:681.41px;font-size:21.4px;font-weight:400;font-family:'Liberation Sans',sans-serif;color:#262626;transform:scaleX(0.9271);">11</span>
<span class="t" id="t61" style="left:8.60px;top:711.56px;font-size:21.4px;font-weight:400;font-family:'Liberation Sans',sans-serif;color:#262626;transform:scaleX(0.8657);">12</span>
<span class="t" id="t62" style="left:8.60px;top:741.70px;font-size:21.4px;font-weight:400;font-family:'Liberation Sans',sans-serif;color:#262626;transform:scaleX(0.8657);">13</span>
<span class="t" id="t63" style="left:8.60px;top:771.86px;font-size:21.4px;font-weight:400;font-family:'Liberation Sans',sans-serif;color:#262626;transform:scaleX(0.8657);">14</span>
<span class="t" id="t64" style="left:8.60px;top:802.01px;font-size:21.4px;font-weight:400;font-family:'Liberation Sans',sans-serif;color:#262626;transform:scaleX(0.8657);">15</span>
<span class="t" id="t65" style="left:8.60px;top:832.16px;font-size:21.4px;font-weight:400;font-family:'Liberation Sans',sans-serif;color:#262626;transform:scaleX(0.8657);">16</span>
<span class="t" id="t66" style="left:8.60px;top:862.31px;font-size:21.4px;font-weight:400;font-family:'Liberation Sans',sans-serif;color:#262626;transform:scaleX(0.8657);">17</span>
<span class="t" id="t67" style="left:8.60px;top:892.45px;font-size:21.4px;font-weight:400;font-family:'Liberation Sans',sans-serif;color:#262626;transform:scaleX(0.8657);">18</span>
<span class="t" id="t68" style="left:8.60px;top:922.61px;font-size:21.4px;font-weight:400;font-family:'Liberation Sans',sans-serif;color:#262626;transform:scaleX(0.8657);">19</span>
<span class="t" id="t69" style="left:8.60px;top:952.76px;font-size:21.4px;font-weight:400;font-family:'Liberation Sans',sans-serif;color:#262626;transform:scaleX(0.8657);">18</span>
<span class="t" id="t70" style="left:534.60px;top:412.30px;font-size:30.8px;font-weight:700;font-family:'Liberation Sans',sans-serif;color:#ffffff;transform:scaleX(0.9464);text-shadow:0 0 2.5px rgba(0,0,0,.5);">To Do</span>
<span class="t" id="t71" style="left:718.40px;top:412.30px;font-size:30.8px;font-weight:700;font-family:'Liberation Sans',sans-serif;color:#ffffff;transform:scaleX(0.9064);text-shadow:0 0 2.5px rgba(0,0,0,.5);">In Progress</span>
<span class="t" id="t72" style="left:969.60px;top:412.30px;font-size:30.8px;font-weight:700;font-family:'Liberation Sans',sans-serif;color:#ffffff;transform:scaleX(0.9610);text-shadow:0 0 2.5px rgba(0,0,0,.5);">Done</span>
<span class="t" id="t73" style="left:1121.60px;top:415.01px;font-size:25.6px;font-weight:700;font-family:'Liberation Sans',sans-serif;color:#ffffff;transform:scaleX(0.9504);text-shadow:0 0 2.5px rgba(0,0,0,.5);">Kanban</span>
<span class="t" id="t74" style="left:498.80px;top:496.01px;font-size:27px;font-weight:400;font-family:'Liberation Sans',sans-serif;color:#111;transform:scaleX(0.9558);-webkit-text-stroke:0.75px #111;">Task 1</span>
<span class="t" id="t75" style="left:500.40px;top:539.01px;font-size:24.6px;font-weight:400;font-family:'Liberation Sans',sans-serif;color:#1d1d1d;transform:scaleX(0.9362);">Example task</span>
<span class="t" id="t76" style="left:498.80px;top:625.91px;font-size:27px;font-weight:400;font-family:'Liberation Sans',sans-serif;color:#111;transform:scaleX(0.9558);-webkit-text-stroke:0.75px #111;">Task 2</span>
<span class="t" id="t77" style="left:500.40px;top:666.91px;font-size:24.6px;font-weight:400;font-family:'Liberation Sans',sans-serif;color:#1d1d1d;transform:scaleX(0.9362);">Example task</span>
<span class="t" id="t78" style="left:711.80px;top:496.01px;font-size:27px;font-weight:400;font-family:'Liberation Sans',sans-serif;color:#111;transform:scaleX(0.9558);-webkit-text-stroke:0.75px #111;">Task 3</span>
<span class="t" id="t79" style="left:713.40px;top:539.01px;font-size:24.6px;font-weight:400;font-family:'Liberation Sans',sans-serif;color:#1d1d1d;transform:scaleX(0.9362);">Example task</span>
<span class="t" id="t80" style="left:941.80px;top:496.01px;font-size:27px;font-weight:400;font-family:'Liberation Sans',sans-serif;color:#111;transform:scaleX(0.9558);-webkit-text-stroke:0.75px #111;">Task 5</span>
<span class="t" id="t81" style="left:943.40px;top:539.01px;font-size:24.6px;font-weight:400;font-family:'Liberation Sans',sans-serif;color:#1d1d1d;transform:scaleX(0.9362);">Example task</span>
<span class="t" id="t82" style="left:941.80px;top:621.41px;font-size:27px;font-weight:400;font-family:'Liberation Sans',sans-serif;color:#111;transform:scaleX(0.9558);-webkit-text-stroke:0.75px #111;">Task 6</span>
<span class="t" id="t83" style="left:943.40px;top:663.01px;font-size:24.6px;font-weight:400;font-family:'Liberation Sans',sans-serif;color:#1d1d1d;transform:scaleX(0.9362);">Example task</span>
<span class="t" id="t84" style="left:941.80px;top:744.30px;font-size:27px;font-weight:400;font-family:'Liberation Sans',sans-serif;color:#111;transform:scaleX(0.9558);-webkit-text-stroke:0.75px #111;">Task 7</span>
<span class="t" id="t85" style="left:943.40px;top:787.01px;font-size:24.6px;font-weight:400;font-family:'Liberation Sans',sans-serif;color:#1d1d1d;transform:scaleX(0.9362);">Example task</span>
</div>
</body></html>
